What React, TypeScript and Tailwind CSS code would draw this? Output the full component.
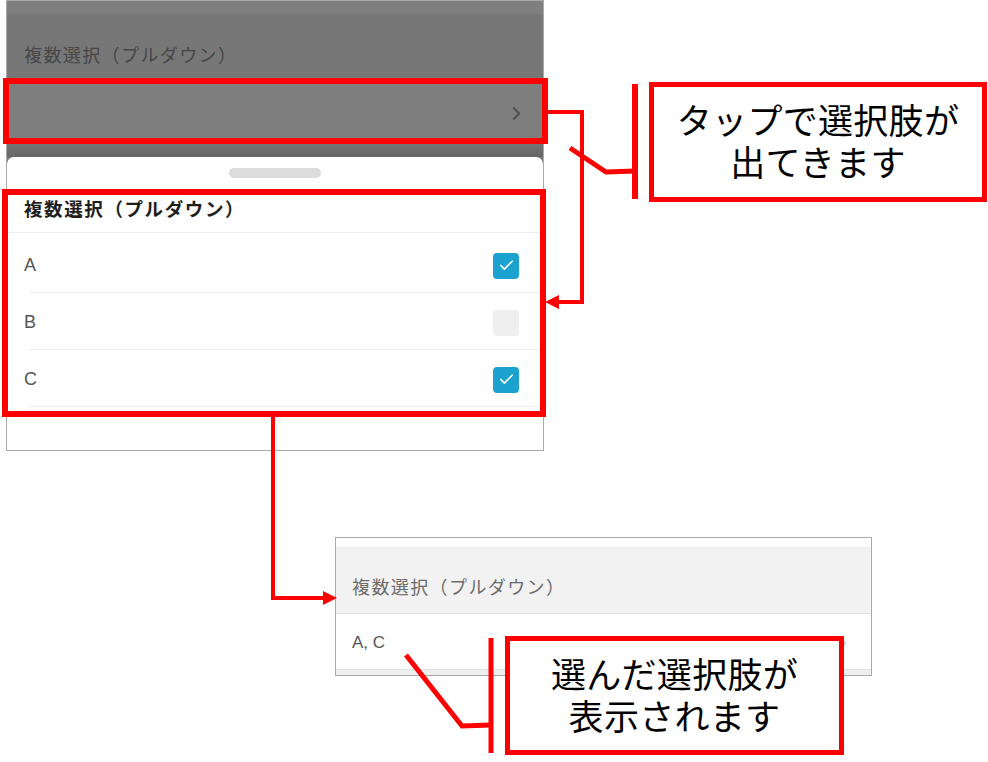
import { Check, ChevronRight } from 'lucide-react';

const jp = "font-['Noto_Sans_CJK_JP',sans-serif]";
const latin = "font-['Liberation_Sans','Noto_Sans_CJK_JP',sans-serif]";

type Option = { label: string; checked: boolean };

const options: Option[] = [
  { label: 'A', checked: true },
  { label: 'B', checked: false },
  { label: 'C', checked: true },
];

function CheckBox({ checked }: { checked: boolean }) {
  if (!checked) {
    return <div className="h-[26px] w-[26px] rounded-[4px] bg-[#efefef]" />;
  }
  return (
    <div className="flex h-[26px] w-[26px] items-center justify-center rounded-[4px] bg-[#1ba2cf]">
      <Check size={17} strokeWidth={2.4} className="text-white" />
    </div>
  );
}

// シート表示中の画面（背景は暗転）
function SheetScreen() {
  return (
    <div className="absolute left-[6px] top-0 flex h-[451px] w-[538px] flex-col border border-[#a9a9a9] bg-[#777777]">
      <div className="h-[13px] bg-[#7f7f7f]" />
      <div className={`flex h-[70px] items-center pl-[17px] pt-[11px] text-[18px] tracking-[1.4px] text-[#464646] ${jp}`}>
        複数選択（プルダウン）
      </div>
      <div className="flex h-[58px] items-center justify-end bg-[#7e7e7e] pr-[16px]">
        <ChevronRight size={21} strokeWidth={2.2} className="text-[#4e4e4e]" />
      </div>
      <div className="h-[15px] bg-gradient-to-b from-[#777777] to-[#666666]" />

      <div className="flex flex-1 flex-col rounded-t-[7px] bg-white">
        <div className="flex justify-center pt-[11px]">
          <div className="h-[10px] w-[92px] rounded-full bg-[#dcdcdc]" />
        </div>
        <div
          className={`flex h-[55px] items-center border-b border-[#ececf0] pl-[17px] pt-[8px] text-[18.5px] font-bold tracking-[1.6px] text-[#1e1e1e] ${jp}`}
        >
          複数選択（プルダウン）
        </div>
        <div className="mt-[3px] flex flex-col">
          {options.map((o) => (
            <div key={o.label} className="flex flex-col">
              <div className="flex h-[56px] items-center justify-between pl-[17px] pr-[24px] pt-[3px]">
                <span className={`text-[18px] text-[#555555] ${latin}`}>{o.label}</span>
                <CheckBox checked={o.checked} />
              </div>
              <div className="ml-[23px] h-px bg-[#ececec]" />
            </div>
          ))}
        </div>
      </div>
    </div>
  );
}

// 選択後の入力欄
function ResultScreen() {
  return (
    <div className="absolute left-[335px] top-[537px] flex h-[139px] w-[537px] flex-col border border-[#a9a9a9] bg-white">
      <div className="h-[9px] bg-white" />
      <div
        className={`flex h-[66px] items-center border-t border-[#ececec] bg-[#f2f2f2] pl-[16px] pt-[12px] text-[18px] tracking-[1.4px] text-[#6b6b6b] ${jp}`}
      >
        複数選択（プルダウン）
      </div>
      <div className="flex h-[56px] items-center justify-between border-t border-[#e2e2e2] pl-[16px] pr-[20px] pt-[3px]">
        <span className={`text-[17px] text-[#555555] ${latin}`}>A, C</span>
        <ChevronRight size={14} strokeWidth={2.5} className="text-[#cfcfcf]" />
      </div>
      <div className="flex-1 border-t border-[#e2e2e2] bg-[#efefef]" />
    </div>
  );
}

function Callout({ className, lines }: { className: string; lines: string[] }) {
  return (
    <div
      className={`absolute flex flex-col items-center justify-center border-[5px] border-[#ff0000] bg-white pb-[4px] text-[35px] leading-[42px] tracking-[0.3px] text-black ${jp} ${className}`}
    >
      {lines.map((l) => (
        <span key={l}>{l}</span>
      ))}
    </div>
  );
}

export default function App() {
  return (
    <div className="relative h-[762px] w-[988px] overflow-hidden bg-white">
      <SheetScreen />
      <ResultScreen />

      {/* 注釈の枠線と引き出し線 */}
      <svg className="pointer-events-none absolute inset-0" width={988} height={762}>
        <g fill="none" stroke="#ff0000" strokeLinejoin="miter">
          <rect x={6} y={81} width={539} height={60} strokeWidth={6} />
          <rect x={5} y={192} width={538} height={222} strokeWidth={6} />

          <polyline points="548,112 582,112 582,302 556,302" strokeWidth={4} />
          <polyline points="273,417 273,598 326,598" strokeWidth={4} />

          <polyline points="570,148 606,172 635,171" strokeWidth={5} />
          <line x1={635} y1={84} x2={635} y2={199} strokeWidth={6} />

          <polyline points="406,655 462,726 491,725" strokeWidth={5} />
          <line x1={491} y1={638} x2={491} y2={753} strokeWidth={5} />
        </g>
        <g fill="#ff0000">
          <polygon points="545,302 559,295 559,309" />
          <polygon points="337,598 323,591 323,605" />
        </g>
      </svg>

      <Callout className="left-[649px] top-[82px] h-[120px] w-[338px]" lines={['タップで選択肢が', '出てきます']} />
      <Callout className="left-[505px] top-[636px] h-[119px] w-[339px]" lines={['選んだ選択肢が', '表示されます']} />
    </div>
  );
}
